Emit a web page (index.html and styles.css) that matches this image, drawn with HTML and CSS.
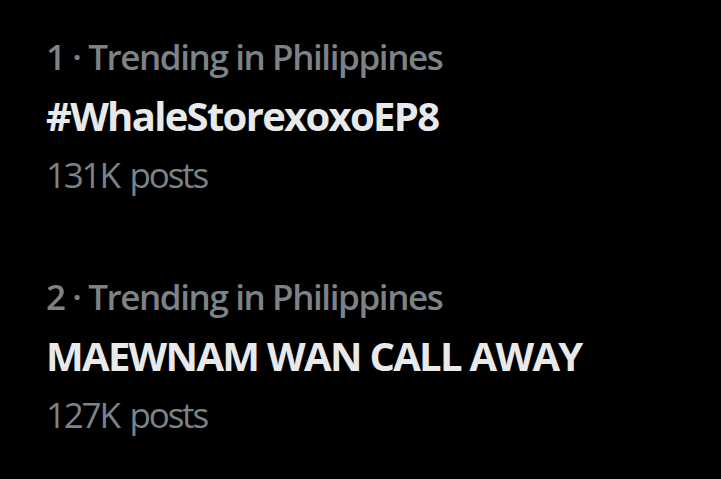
FILE: index.html
```html
<!DOCTYPE html>
<html lang="en">
<head>
  <meta charset="UTF-8">
  <meta name="viewport" content="width=device-width, initial-scale=1.0">
  <title>Trending</title>
  <link rel="stylesheet" href="styles.css">
</head>
<body>
  <div class="trends">
    <!-- trend 1 -->
    <div class="trend">
      <div class="trend-meta">1 · Trending in Philippines</div>
      <div class="trend-name">#WhaleStorexoxoEP8</div>
      <div class="trend-count">131K posts</div>
    </div>
    <!-- trend 2 -->
    <div class="trend">
      <div class="trend-meta">2 · Trending in Philippines</div>
      <div class="trend-name">MAEWNAM WAN CALL AWAY</div>
      <div class="trend-count">127K posts</div>
    </div>
  </div>
</body>
</html>
```

FILE: styles.css
```css
:root {
  --bg: #000000;
  --text-main: #e7e9ea;
  --text-secondary: #7d8287;
}
*, *::before, *::after { box-sizing: border-box; }
body {
  margin: 0;
  background: var(--bg);
  font-family: "Open Sans", sans-serif;
  color: var(--text-main);
}
.trends {
  display: flex;
  flex-direction: column;
  gap: 65px;
  padding: 28px 46px;
}
.trend-meta {
  font-size: 35px;
  font-weight: 600;
  line-height: 58px;
  color: var(--text-secondary);
  letter-spacing: -1.4px;
}
.trend-name {
  font-size: 40px;
  font-weight: 700;
  line-height: 60px;
  letter-spacing: -1.7px;
}
.trend-count {
  font-size: 35px;
  line-height: 57px;
  color: var(--text-secondary);
  letter-spacing: -2.2px;
  word-spacing: 4px;
}
```
